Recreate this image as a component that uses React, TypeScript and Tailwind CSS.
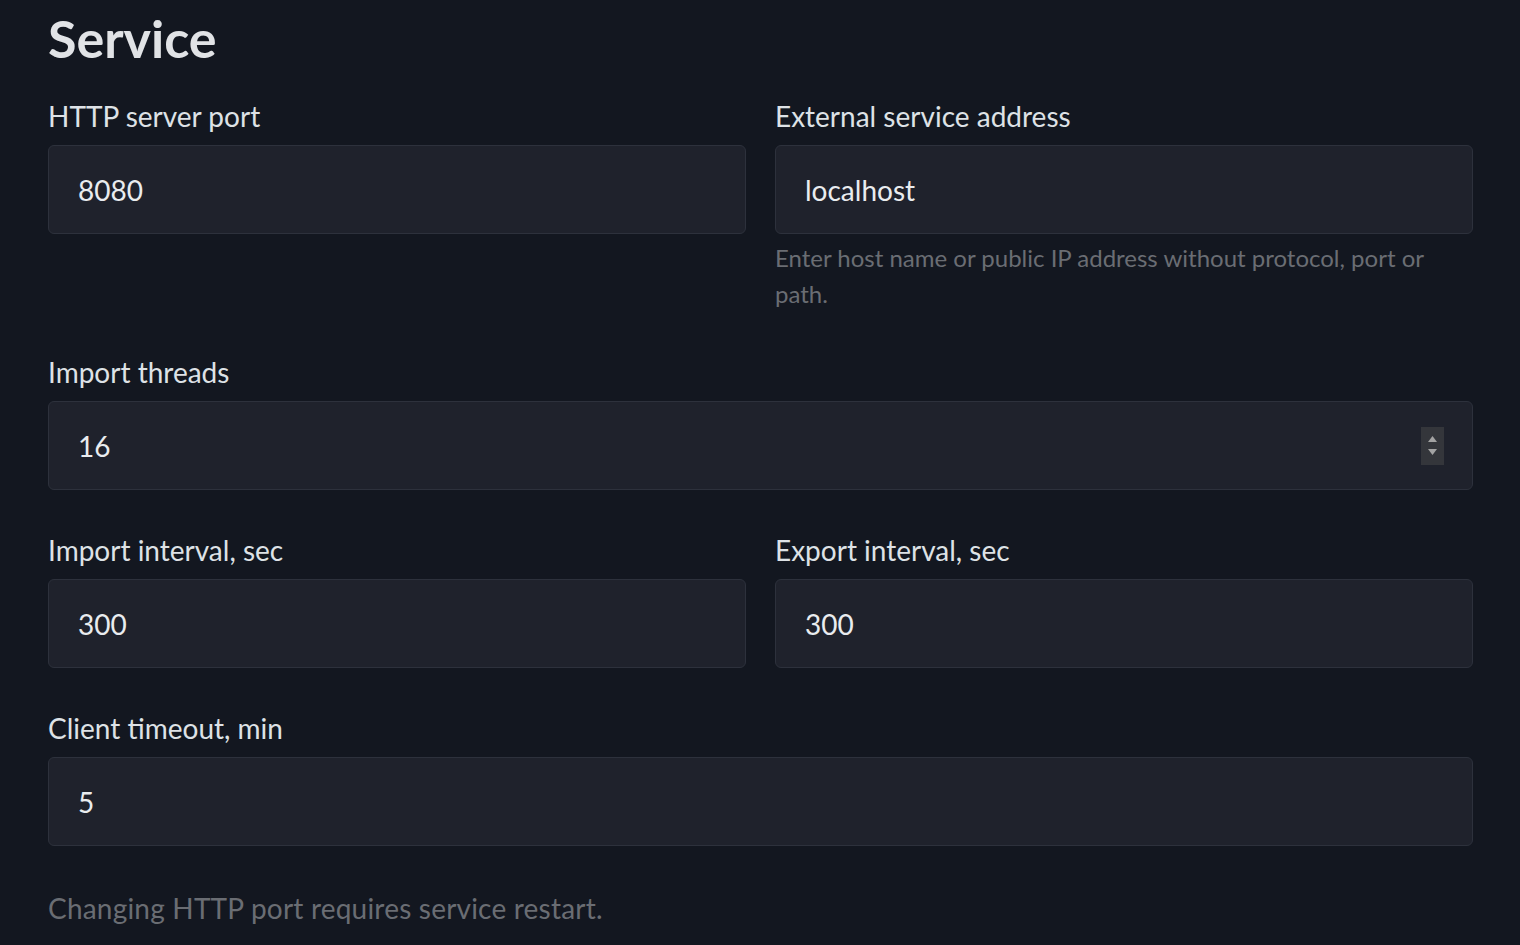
type FieldProps = {
  label: string;
  value: string;
  help?: string;
  spinner?: boolean;
};

function Field({ label, value, help, spinner }: FieldProps) {
  return (
    <div className="mb-[39px]">
      <label className="block text-[28px] leading-[42px] text-[#dee2e6] mb-[8px]">{label}</label>
      <div className="flex items-center h-[89px] rounded-[6px] border border-[#2d313c] bg-[#1f222c] pl-[29px] pr-[28px]">
        <span className="flex-1 text-[28px] text-[#e9ecef]">{value}</span>
        {spinner && (
          <div className="flex flex-col items-center justify-center w-[23px] h-[38px] bg-[#34363b] text-[#a3a3a3]">
            <svg width="11" height="8" viewBox="0 0 11 8" className="mb-[5px]">
              <path d="M5.5 1 L10 7 L1 7 Z" fill="currentColor" />
            </svg>
            <svg width="11" height="8" viewBox="0 0 11 8">
              <path d="M1 1 L10 1 L5.5 7 Z" fill="currentColor" />
            </svg>
          </div>
        )}
      </div>
      {help && <p className="mt-[6px] text-[24px] leading-[36px] text-[#6a6d73]">{help}</p>}
    </div>
  );
}

export default function App() {
  return (
    <div className="min-h-[945px] bg-[#131720] pl-12 pr-[47px] pt-[7px] font-['Lato',sans-serif]">
      <h4 className="text-[52px] leading-[62px] font-bold text-[#e1e3e6] mb-[26px]">Service</h4>

      <div className="grid grid-cols-2 gap-x-[29px]">
        <Field label="HTTP server port" value="8080" />
        <Field
          label="External service address"
          value="localhost"
          help="Enter host name or public IP address without protocol, port or path."
        />
      </div>

      <Field label="Import threads" value="16" spinner />

      <div className="grid grid-cols-2 gap-x-[29px]">
        <Field label="Import interval, sec" value="300" />
        <Field label="Export interval, sec" value="300" />
      </div>

      <Field label="Client timeout, min" value="5" />

      <p className="pt-[2px] text-[28px] leading-[42px] tracking-[0.2px] text-[#6a6d73]">
        Changing HTTP port requires service restart.
      </p>
    </div>
  );
}
